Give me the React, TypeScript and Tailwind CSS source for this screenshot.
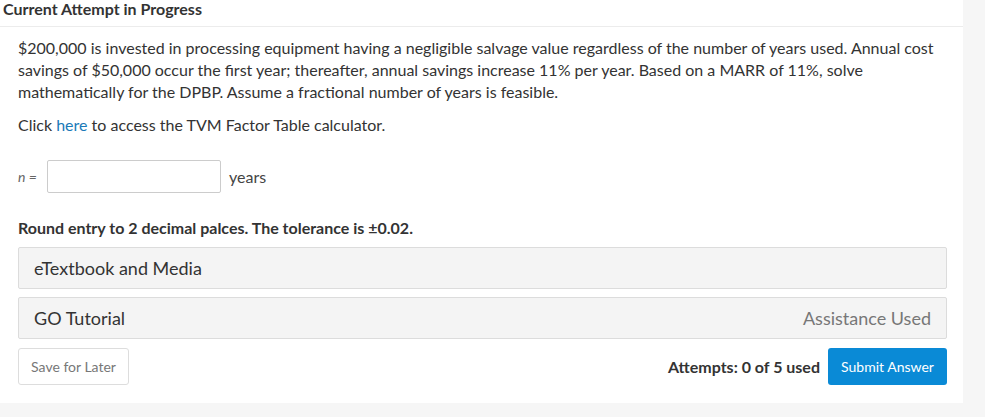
export default function App() {
  return (
    <div className="min-h-[417px] w-[985px] bg-[#f6f6f6] font-['Lato','Liberation_Sans',sans-serif] text-[#333]">
      <div className="w-[963px] bg-white pb-[18px]">
        {/* Header */}
        <div className="h-[27px] border-b border-[#ececec] pl-[3px]">
          <h2 className="text-[16px] font-bold leading-[18px] text-[#333]">
            Current Attempt in Progress
          </h2>
        </div>

        <div className="pl-[18px] pr-[16px] pt-[10px]">
          <p className="text-[16px] leading-[22px]">
            $200,000 is invested in processing equipment having a negligible salvage value regardless of the number of years used. Annual cost savings of $50,000 occur the first year; thereafter, annual savings increase 11% per year. Based on a MARR of 11%, solve mathematically for the DPBP. Assume a fractional number of years is feasible.
          </p>
          <p className="mt-[11px] text-[16px] leading-[22px]">
            Click <a className="text-[#1a7ab8]">here</a> to access the TVM Factor Table calculator.
          </p>

          {/* Answer input */}
          <div className="mt-[24px] flex items-center">
            <span className="w-[29px] text-[14px] italic text-[#666]">n =</span>
            <input
              type="text"
              className="h-[33px] w-[174px] rounded-[2px] border border-[#ccc] bg-white outline-none"
            />
            <span className="ml-[8px] text-[16px] text-[#444]">years</span>
          </div>

          <p className="mt-[24px] text-[16px] font-bold leading-[22px]">
            Round entry to 2 decimal palces. The tolerance is ±0.02.
          </p>

          {/* Resource panels */}
          <div className="mt-[8px] flex flex-col gap-[8px]">
            <div className="flex h-[42px] items-center rounded-[2px] border border-[#dcdcdc] bg-[#f4f4f4] px-[15px]">
              <span className="text-[18px] text-[#333]">eTextbook and Media</span>
            </div>
            <div className="flex h-[42px] items-center justify-between rounded-[2px] border border-[#dcdcdc] bg-[#f4f4f4] px-[15px]">
              <span className="text-[18px] text-[#333]">GO Tutorial</span>
              <span className="text-[18px] text-[#777]">Assistance Used</span>
            </div>
          </div>

          {/* Footer actions */}
          <div className="mt-[9px] flex items-center justify-between">
            <button className="h-[37px] w-[111px] rounded-[3px] border border-[#ddd] bg-white text-[14px] text-[#777]">
              Save for Later
            </button>
            <div className="flex items-center gap-[8px]">
              <span className="text-[16px] font-bold text-[#333]">Attempts: 0 of 5 used</span>
              <button className="h-[37px] w-[119px] rounded-[3px] bg-[#0a8ad6] text-[14px] text-white">
                Submit Answer
              </button>
            </div>
          </div>
        </div>
      </div>
    </div>
  );
}
